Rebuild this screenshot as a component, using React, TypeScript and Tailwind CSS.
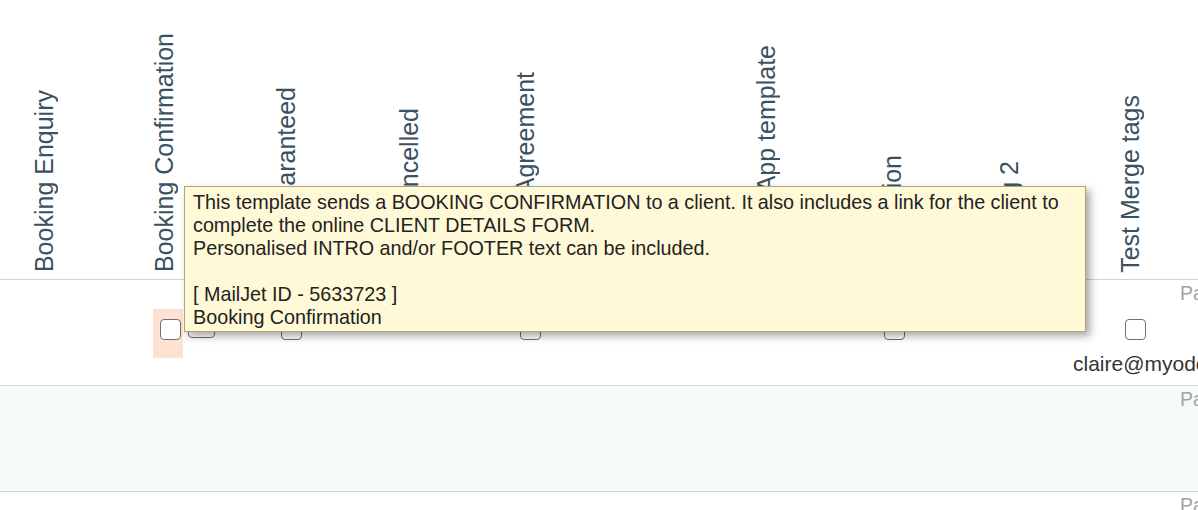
import React from "react";

function Box({ className = "" }: { className?: string }) {
  return (
    <div
      className={
        "w-[21px] h-[21px] shrink-0 rounded-[4px] border-[1.5px] border-[#707070] bg-white " +
        className
      }
    />
  );
}

function Head({ label, cls }: { label: string; cls: string }) {
  return (
    <span
      className={
        "[writing-mode:vertical-rl] rotate-180 text-[25px] leading-[28px] whitespace-nowrap text-[#3a5260] " +
        cls
      }
    >
      {label}
    </span>
  );
}

export default function App() {
  return (
    <div className="relative w-[1198px] h-[510px] overflow-hidden bg-white font-['Liberation_Sans',Arial,sans-serif]">
      {/* header row */}
      <div className="flex h-[280px] border-b border-[#d2d2d2]">
        <div className="w-[120px] shrink-0 flex items-end pb-[7px]">
          <Head label="Booking Enquiry" cls="ml-[30px]" />
        </div>
        <div className="w-[120px] shrink-0 flex items-end pb-[7px]">
          <Head label="Booking Confirmation" cls="ml-[30px]" />
        </div>
        <div className="w-[120px] shrink-0 flex items-end pb-[7px]">
          <Head label="Hire Guaranteed" cls="ml-[32px]" />
        </div>
        <div className="w-[120px] shrink-0 flex items-end pb-[7px]">
          <Head label="Hire Cancelled" cls="ml-[35px]" />
        </div>
        <div className="w-[120px] shrink-0 flex items-end pb-[7px]">
          <Head label="Rental Agreement" cls="ml-[31px]" />
        </div>
        <div className="w-[120px] shrink-0 flex items-end pb-[7px]">
          <Head label="Invoice" cls="ml-[33px]" />
        </div>
        <div className="w-[120px] shrink-0 flex items-end pb-[7px]">
          <Head label="Mobile App template" cls="ml-[32px]" />
        </div>
        <div className="w-[120px] shrink-0 flex items-end pb-[7px]">
          <Head label="Evaluation" cls="ml-[38px]" />
        </div>
        <div className="w-[120px] shrink-0 flex items-end pb-[7px]">
          <Head label="Booking 2" cls="ml-[35px]" />
        </div>
        <div className="w-[95px] shrink-0 flex items-end pb-[6px]">
          <Head label="Test Merge tags" cls="ml-[36px]" />
        </div>
        <div className="flex-1" />
      </div>

      {/* row 1 */}
      <div className="flex h-[106px] border-b border-[#d6d6d6] bg-white">
        <div className="w-[120px] shrink-0" />
        <div className="w-[120px] shrink-0 flex items-start">
          <div className="ml-[33px] mt-[29px] w-[30px] h-[49px] bg-[#fde2d2] pl-[7px] pt-[10px]">
            <Box />
          </div>
          <div className="ml-[5px] mt-[36px] w-[27px] h-[22px] rounded-[4px] border-[1.5px] border-[#707070] bg-white" />
        </div>
        <div className="w-[120px] shrink-0">
          <Box className="ml-[41px] mt-[39px]" />
        </div>
        <div className="w-[120px] shrink-0" />
        <div className="w-[120px] shrink-0">
          <Box className="ml-[40px] mt-[39px]" />
        </div>
        <div className="w-[120px] shrink-0" />
        <div className="w-[120px] shrink-0" />
        <div className="w-[120px] shrink-0">
          <Box className="ml-[44px] mt-[39px]" />
        </div>
        <div className="w-[120px] shrink-0" />
        <div className="w-[95px] shrink-0 flex flex-col">
          <Box className="ml-[45px] mt-[39px]" />
          <div className="ml-[-7px] mt-[12px] text-[21px] leading-[23px] whitespace-nowrap text-[#333]">
            claire@myodomain.com
          </div>
        </div>
        <div className="flex-1 pl-[5px] pt-[2px] text-[19.5px] leading-[23px] whitespace-nowrap text-[#a3a3a3]">
          Paid
        </div>
      </div>

      {/* row 2 */}
      <div className="flex h-[106px] border-b border-[#d6d6d6] bg-[#f7fafb]">
        <div className="w-[1175px] shrink-0" />
        <div className="flex-1 pl-[5px] pt-[2px] text-[19.5px] leading-[23px] whitespace-nowrap text-[#a3a3a3]">
          Paid
        </div>
      </div>

      {/* row 3 */}
      <div className="flex h-[106px] bg-white">
        <div className="w-[1175px] shrink-0" />
        <div className="flex-1 pl-[5px] pt-[2px] text-[19.5px] leading-[23px] whitespace-nowrap text-[#a3a3a3]">
          Paid
        </div>
      </div>

      {/* tooltip */}
      <div className="absolute left-[184px] top-[186px] w-[902px] h-[146px] bg-[#fff9d7] border border-[#b1a46c] shadow-[4px_4px_8px_rgba(0,0,0,0.35)] pl-[8px] pt-[4px] text-[19.75px] leading-[23.1px] text-[#222] whitespace-nowrap">
        <div>
          This template sends a BOOKING CONFIRMATION to a client. It also includes a link for the client to
        </div>
        <div>complete the online CLIENT DETAILS FORM.</div>
        <div>Personalised INTRO and/or FOOTER text can be included.</div>
        <div className="h-[23.1px]" />
        <div>[ MailJet ID - 5633723 ]</div>
        <div>Booking Confirmation</div>
      </div>
    </div>
  );
}
